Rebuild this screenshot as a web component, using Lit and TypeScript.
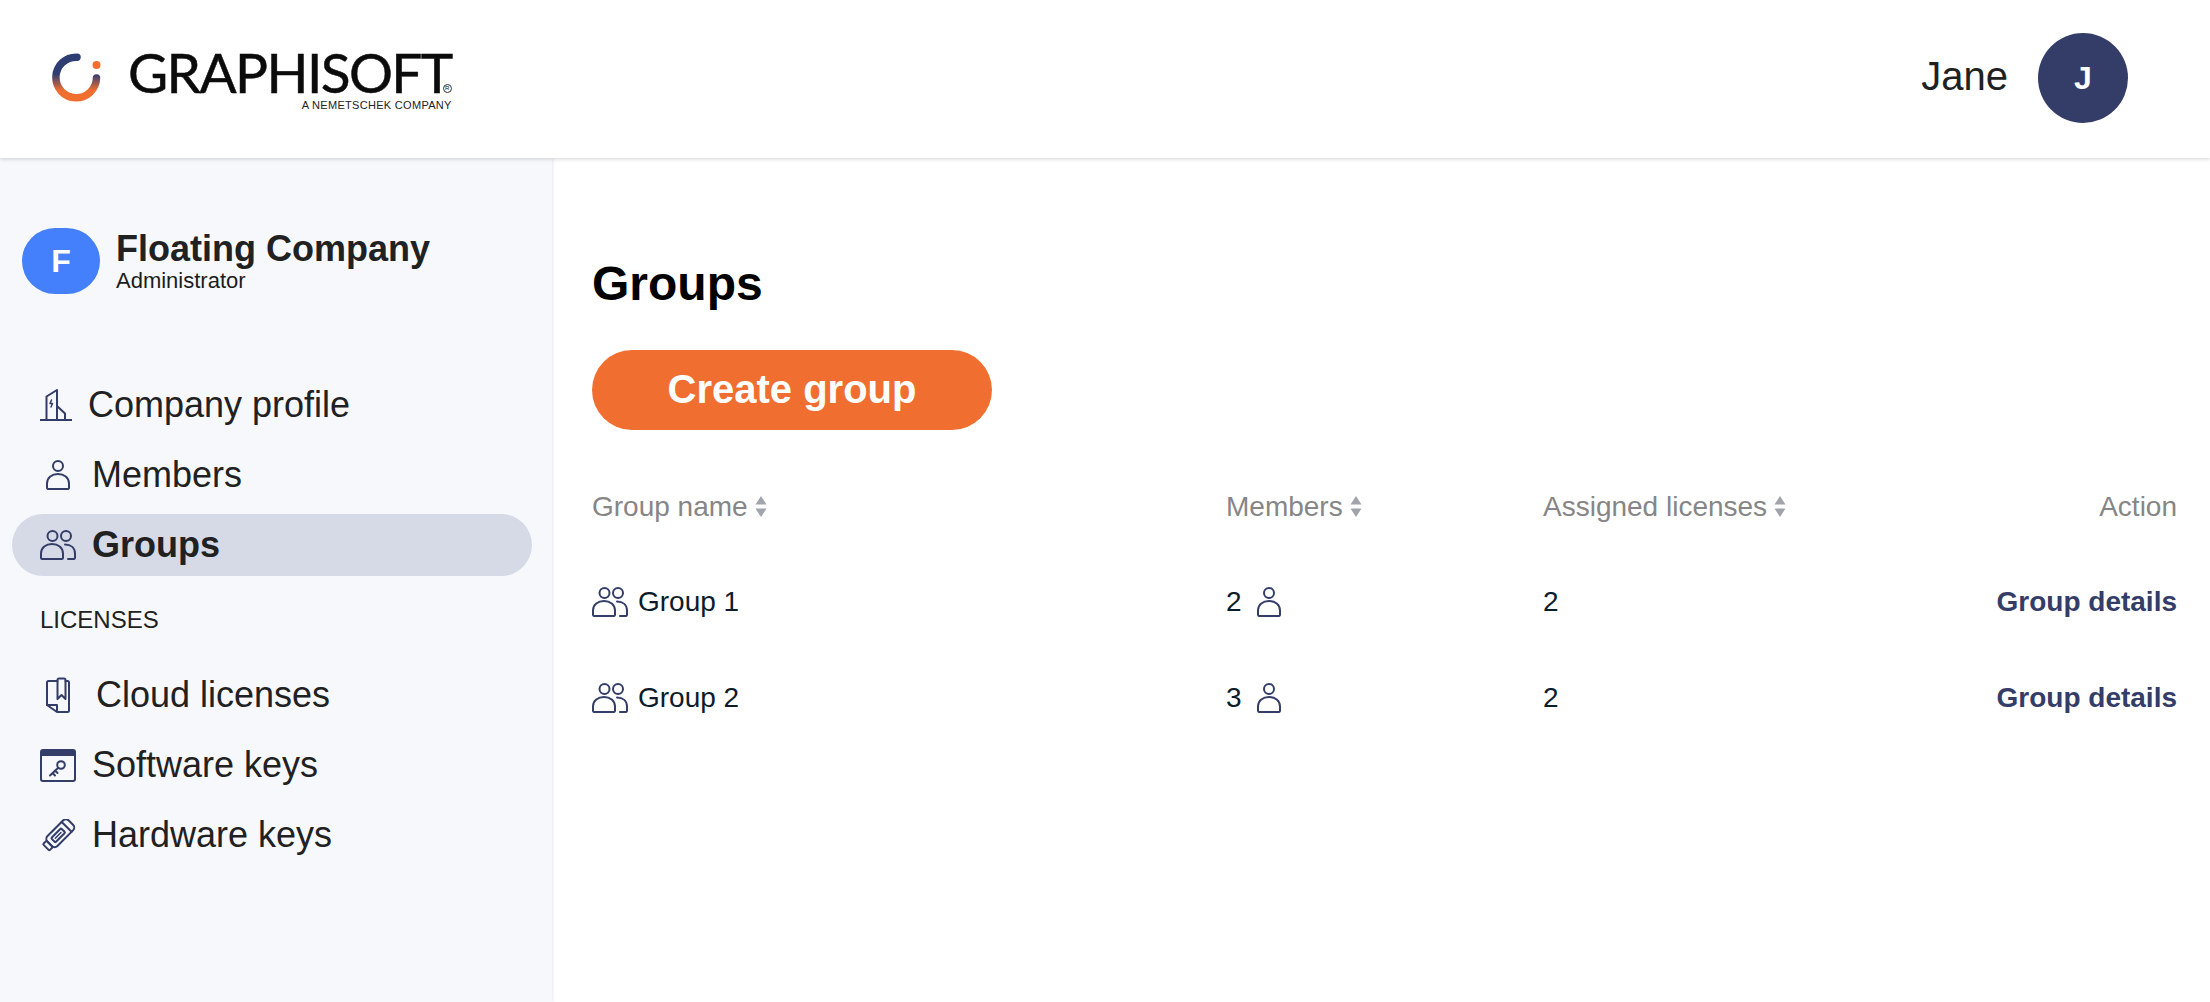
import { LitElement, html, css } from "lit";
import { customElement } from "lit/decorators.js";

const S = `fill:none;stroke:#343d68;stroke-width:2;stroke-linecap:round;stroke-linejoin:round`;

const person = () => html`<svg class="ico" width="36" height="30" viewBox="-6 0 36 30" style=${S}>
  <circle cx="12" cy="6" r="5"/>
  <path d="M2 29h20a1.400 1.400 0 0 0 1-1.200v-4.300c0-6-5-9.500-11-9.500S1 17.500 1 23.500v4.300A1.400 1.400 0 0 0 2 29z"/>
</svg>`;

const people = () => html`<svg class="ico" width="36" height="30" viewBox="0 0 36 30" style=${S}>
  <circle cx="12.500" cy="6" r="5"/><circle cx="26" cy="6" r="5"/>
  <path d="M2 29h20a1.400 1.400 0 0 0 1-1.200v-4.300c0-6-5-9.500-11-9.500S1 17.500 1 23.500v4.300A1.400 1.400 0 0 0 2 29z"/>
  <path d="M25 14.500c6 0 10 3.500 10 9v4.300a1.400 1.400 0 0 1-1 1.200h-6"/>
</svg>`;

const building = () => html`<svg class="ico" width="32" height="32" viewBox="0 0 32 32" style=${S}>
  <path d="M0 31h32"/>
  <path d="M6.500 31V7.500L17 1v30"/>
  <path d="M17 17l8 7.500V31"/>
  <path d="M11.500 11l-1.500 3.500h2.500L11 18" stroke-width="1.500"/>
</svg>`;

const book = () => html`<svg class="ico" width="40" height="36" viewBox="0 0 40 36" style=${S}>
  <path d="M7 28V5.500A1.500 1.500 0 0 1 8.500 4h9"/>
  <path d="M25.500 4h2A1.500 1.500 0 0 1 29 5.500v28a1.500 1.500 0 0 1-1.500 1.500H17L7 28h10v7"/>
  <path d="M17.500 22V3A1.500 1.500 0 0 1 19 1.500h5A1.500 1.500 0 0 1 25.500 3v19l-4-4z"/>
</svg>`;

const softkey = () => html`<svg class="ico" width="36" height="33" viewBox="0 0 36 33">
  <rect x="1" y="1" width="34" height="31" rx="2" style=${S}/>
  <path d="M1 2.500A1.500 1.500 0 0 1 2.500 1h31A1.500 1.500 0 0 1 35 2.500V7H1z" fill="#343d68"/>
  <circle cx="21" cy="16" r="3.800" style=${S}/>
  <path d="M18 19l-8 7.500M12.500 24l2.500 2.500M15 21.500l2.500 2.500" style=${S}/>
</svg>`;

const usb = () => html`<svg class="ico" width="36" height="33" viewBox="0 0 36 33" style=${S}>
  <g transform="rotate(-45 18.500 16)">
    <rect x="1" y="11.500" width="5" height="9" rx="1"/>
    <rect x="6" y="9" width="30" height="14" rx="4"/>
    <rect x="11" y="13" width="14" height="6" rx="1"/>
    <path d="M14 16h8" stroke-width="1.500"/>
    <path d="M30 9v14"/>
  </g>
</svg>`;

const sort = () => html`<svg class="sort" width="12" height="21" viewBox="0 0 12 21" fill="#a1a4ad">
  <path d="M6 0l5.500 8.500H.5z"/><path d="M6 21L.5 12.500h11z"/>
</svg>`;

const nav = [
  { icon: building, label: "Company profile" },
  { icon: person, label: "Members" },
  { icon: people, label: "Groups", active: true },
];
const licenses = [
  { icon: book, label: "Cloud licenses" },
  { icon: softkey, label: "Software keys" },
  { icon: usb, label: "Hardware keys" },
];
const groups = [
  { name: "Group 1", members: 2, licenses: 2 },
  { name: "Group 2", members: 3, licenses: 2 },
];

@customElement("app-root")
export class AppRoot extends LitElement {
  static styles = css`
    :host { display: block; height: 1002px; overflow: hidden; background: #fff;
      font-family: "Liberation Sans", Arial, sans-serif; color: #212121; }
    * { box-sizing: border-box; }
    .top { height: 158px; display: flex; align-items: center; justify-content: space-between;
      padding: 0 82px 2px 52px; background: #fff; position: relative; z-index: 2;
      box-shadow: 0 1px 4px rgba(0,0,0,.18); }
    .logo { display: flex; align-items: center; gap: 26px; }
    .mark { display: block; }
    .word { display: flex; flex-direction: column; align-items: flex-end; position: relative; color: #0b0b0b; padding-top: 5px; }
    .word b { font: 400 55px/46px Lato, "Liberation Sans", sans-serif; letter-spacing: -1.6px; -webkit-text-stroke: .5px #0b0b0b; }
    .word small { font-size: 11px; line-height: 13px; letter-spacing: .3px; color: #222; margin-top: 4px; }
    .word i { position: absolute; right: 0; top: 40px; border: 1px solid #333; border-radius: 50%;
      width: 9px; height: 9px; text-align: center; font: 400 6px/7px "Liberation Sans", sans-serif; }
    .user { display: flex; align-items: center; gap: 30px; font-size: 40px; }
    .user span { padding-bottom: 3px; }
    .uav { width: 90px; height: 90px; border-radius: 50%; background: #343d68; color: #fff;
      font-size: 32px; font-weight: 700; display: flex; align-items: center; justify-content: center; }
    .body { display: flex; height: 844px; }
    aside { width: 552px; flex: none; background: #f6f8fc; padding: 70px 20px 0 12px;
      box-shadow: 1px 0 3px rgba(0,0,0,.09); }
    .co { display: flex; gap: 16px; margin-left: 10px; height: 66px; }
    .cav { width: 78px; height: 66px; border-radius: 33px; background: #4480fb; color: #fff;
      font-size: 32px; font-weight: 700; display: flex; align-items: center; justify-content: center; }
    .co h2 { margin: 1px 0 0; font-size: 36px; line-height: 40px; font-weight: 700; }
    .co p { margin: -1px 0 0; font-size: 22px; line-height: 26px; color: #1c1c1c; }
    ul { list-style: none; margin: 0; padding: 0; display: flex; flex-direction: column; gap: 8px; }
    .n1 { margin-top: 80px; }
    .n2 { margin-top: 30px; }
    li { height: 62px; border-radius: 31px; padding-left: 28px; display: flex; align-items: center;
      gap: 16px; font-size: 36px; }
    li.on { background: #d5dae6; font-weight: 700; }
    .ico { display: block; flex: none; }
    .cap { margin: 30px 0 0 28px; font-size: 24px; line-height: 28px; font-weight: 400; }
    main { flex: 1; padding: 98px 33px 0 40px; }
    h1 { margin: 0; font-size: 48px; line-height: 56px; font-weight: 700; color: #000; }
    .btn { display: block; width: 400px; height: 80px; margin-top: 38px; border: 0; border-radius: 40px;
      background: #f06f30; color: #fff; font: 700 40px/76px "Liberation Sans", sans-serif; padding: 0 0 3px; }
    .grid { display: grid; grid-template-columns: 634px 317px 1fr auto; margin-top: 29px; font-size: 28px; }
    .c { height: 96px; display: flex; align-items: center; color: #0c1c2a; }
    .th { color: #868686; gap: 7px; height: 95px; }
    .end { justify-content: flex-end; }
    .name { gap: 10px; }
    .num { gap: 9px; }
    a { color: #343d68; font-weight: 700; text-decoration: none; }
  `;

  render() {
    return html`
      <header class="top">
        <div class="logo">
          <svg class="mark" width="50" height="50" viewBox="0 0 50 50">
            <defs><linearGradient id="g" x1="0" y1="0" x2="0" y2="1">
              <stop offset=".42" stop-color="#2f3e72"/><stop offset=".82" stop-color="#f06f30"/>
            </linearGradient></defs>
            <path d="M25 4.200A20.300 20.300 0 1 0 44.500 25" fill="none" stroke="url(#g)" stroke-width="7.500" stroke-linecap="round"/>
            <circle cx="44.500" cy="12" r="4" fill="#f06f30"/>
          </svg>
          <div class="word"><b>GRAPHISOFT</b><i>R</i><small>A NEMETSCHEK COMPANY</small></div>
        </div>
        <div class="user"><span>Jane</span><div class="uav">J</div></div>
      </header>
      <div class="body">
        <aside>
          <div class="co"><div class="cav">F</div><div><h2>Floating Company</h2><p>Administrator</p></div></div>
          <ul class="n1">${nav.map((n) => html`<li class=${n.active ? "on" : ""}>${n.icon()}<span>${n.label}</span></li>`)}</ul>
          <h3 class="cap">LICENSES</h3>
          <ul class="n2">${licenses.map((n) => html`<li>${n.icon()}<span>${n.label}</span></li>`)}</ul>
        </aside>
        <main>
          <h1>Groups</h1>
          <button class="btn">Create group</button>
          <div class="grid">
            <div class="c th">Group name ${sort()}</div>
            <div class="c th">Members ${sort()}</div>
            <div class="c th">Assigned licenses ${sort()}</div>
            <div class="c th end">Action</div>
            ${groups.map((g) => html`
              <div class="c name">${people()}<span>${g.name}</span></div>
              <div class="c num"><span>${g.members}</span>${person()}</div>
              <div class="c">${g.licenses}</div>
              <div class="c end"><a href="#">Group details</a></div>
            `)}
          </div>
        </main>
      </div>
    `;
  }
}
